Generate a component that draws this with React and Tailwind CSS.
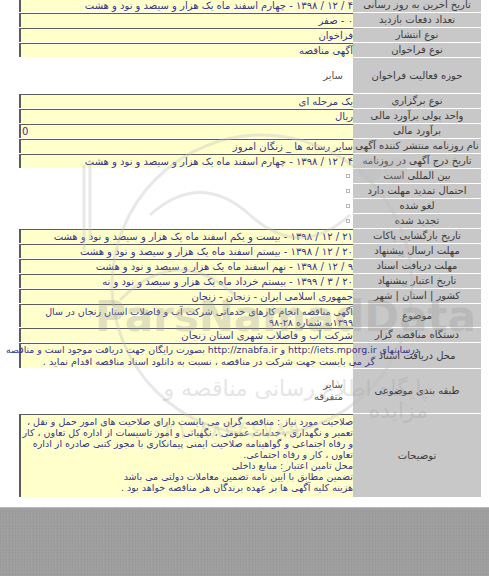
const FONT = { fontFamily: '"DejaVu Sans", Tahoma, sans-serif' };

const rows = [
  { label: 'تاریخ آخرین به روز رسانی', value: '۴ / ۱۲ / ۱۳۹۸ - چهارم اسفند ماه یک هزار و سیصد و نود و هشت' },
  { label: 'تعداد دفعات بازدید', value: '۰ - صفر' },
  { label: 'نوع انتشار', value: 'فراخوان' },
  { label: 'نوع فراخوان', value: 'آگهی مناقصه' },
  { label: 'حوزه فعالیت فراخوان', plain: ['سایر'], h: 'h-[35px]' },
  { label: 'نوع برگزاری', value: 'یک مرحله ای' },
  { label: 'واحد پولی برآورد مالی', value: 'ریال' },
  { label: 'برآورد مالی', value: '0', ltr: true },
  { label: 'نام روزنامه منتشر کننده آگهی', value: 'سایر رسانه ها _ زنگان امروز' },
  { label: 'تاریخ درج آگهی در روزنامه', value: '۴ / ۱۲ / ۱۳۹۸ - چهارم اسفند ماه یک هزار و سیصد و نود و هشت' },
  { label: 'بین المللی است', check: true },
  { label: 'احتمال تمدید مهلت دارد', check: true },
  { label: 'لغو شده', check: true },
  { label: 'تجدید شده', check: true },
  { label: 'تاریخ بازگشایی پاکات', value: '۲۱ / ۱۲ / ۱۳۹۸ - بیست و یکم اسفند ماه یک هزار و سیصد و نود و هشت' },
  { label: 'مهلت ارسال پیشنهاد', value: '۲۰ / ۱۲ / ۱۳۹۸ - بیستم اسفند ماه یک هزار و سیصد و نود و هشت' },
  { label: 'مهلت دریافت اسناد', value: '۹ / ۱۲ / ۱۳۹۸ - نهم اسفند ماه یک هزار و سیصد و نود و هشت' },
  { label: 'تاریخ اعتبار پیشنهاد', value: '۲۰ / ۳ / ۱۳۹۹ - بیستم خرداد ماه یک هزار و سیصد و نود و نه' },
  { label: 'کشور | استان | شهر', value: 'جمهوری اسلامی ایران - زنجان - زنجان' },
  {
    label: 'موضوع',
    lines: ['آگهی مناقصه انجام کارهای خدماتی شرکت آب و فاضلاب استان زنجان در سال', '۱۳۹۹به شماره ۲۸-۹۸'],
    h: 'h-[23px]',
  },
  { label: 'دستگاه مناقصه گزار', value: 'شرکت آب و فاضلاب شهری استان زنجان' },
  { label: 'محل دریافت اسناد', docs: true, h: 'h-[25px]' },
  { label: 'طبقه بندی موضوعی', plain: ['سایر', 'متفرقه'], h: 'h-[44px]' },
  {
    label: 'توضیحات',
    lines: [
      'صلاحیت مورد نیاز : مناقصه گران می بایست دارای صلاحیت های امور حمل و نقل ،',
      'تعمیر و نگهداری ، خدمات عمومی ، نگهبانی و امور تاسیسات از اداره کل تعاون ، کار',
      'و رفاه اجتماعی و گواهینامه صلاحیت ایمنی پیمانکاری با مجوز کتبی صادره از اداره',
      'تعاون ، کار و رفاه اجتماعی.',
      'محل تامین اعتبار : منابع داخلی',
      'تضمین مطابق با آیین نامه تضمین معاملات دولتی می باشد',
      'هزینه کلیه آگهی ها بر عهده برندگان هر مناقصه خواهد بود .',
    ],
    h: 'h-[83px]',
  },
];

function Value({ row }) {
  if (row.check) {
    return (
      <div className="flex h-full items-center pr-[3px]">
        <span className="block h-[4px] w-[4px] border border-[#b8b8b8] bg-white" />
      </div>
    );
  }
  if (row.plain) {
    return (
      <div className="flex h-full flex-col justify-center pr-[10px] text-[10px] leading-[12px] text-[#555]">
        {row.plain.map((t) => (
          <div key={t}>{t}</div>
        ))}
      </div>
    );
  }
  const box = 'h-full bg-[#ffffcc] border-t border-l-2 border-[#5c5c5c] text-[#35358c] overflow-visible';
  if (row.docs) {
    return (
      <div className={`${box} text-[9.4px] leading-[12px]`}>
        <div className="relative z-10 mr-[-66px] whitespace-nowrap">
          درسایتهای <span dir="ltr">http://iets.mporg.ir</span> و <span dir="ltr">http://znabfa.ir</span> بصورت رایگان جهت دریافت موجود است و مناقصه
        </div>
        <div className="relative z-10 mr-[-22px] whitespace-nowrap text-[9.7px]">
          گر می بایست جهت شرکت در مناقصه ، نسبت به دانلود اسناد مناقصه اقدام نماید .
        </div>
      </div>
    );
  }
  if (row.lines) {
    return (
      <div className={`${box} text-[9.5px] leading-[11px] pt-px`}>
        {row.lines.map((t) => (
          <div key={t} className="whitespace-nowrap">
            {t}
          </div>
        ))}
      </div>
    );
  }
  return (
    <div className={`${box} flex items-center text-[10px] leading-none ${row.ltr ? 'justify-end pl-px' : ''}`}>
      <span className="whitespace-nowrap">{row.value}</span>
    </div>
  );
}

function Watermark() {
  return (
    <div className="pointer-events-none absolute inset-0 z-20">
      <svg width="489" height="576" className="absolute left-0 top-0">
        <g fill="none" stroke="#bdbdbd" strokeOpacity="0.35" strokeWidth="3">
          <circle cx="262" cy="285" r="150" />
          <path d="M90 160 L90 240 M84 165 L84 250" />
          <path d="M150 215 Q200 170 250 215 T350 215" />
          <path d="M120 300 Q180 240 240 300" />
        </g>
        <g fill="#bdbdbd" fillOpacity="0.3">
          <circle cx="395" cy="170" r="12" />
          <circle cx="370" cy="170" r="12" />
        </g>
      </svg>
      <div className="absolute left-[95px] top-[296px] text-[42px] font-bold leading-none text-[#9a9a9a] opacity-30" style={{ fontFamily: '"DejaVu Sans", sans-serif' }}>
        ParsNamadData
      </div>
      <div dir="rtl" className="absolute left-[98px] top-[378px] w-[330px] text-[22px] leading-none text-[#9a9a9a] opacity-25" style={FONT}>
        پایگاه اطلاع رسانی مناقصه و مزایده
      </div>
      <div className="absolute left-[150px] top-[418px] text-[24px] leading-none text-[#9a9a9a] opacity-20" style={FONT}>
        ۰۲۱-۸۸۳۴۶۷۸۹
      </div>
    </div>
  );
}

export default function App() {
  return (
    <div className="relative h-[576px] w-[489px] overflow-hidden bg-white" style={FONT}>
      <div dir="rtl" className="-mt-[2px] flex flex-col gap-px pl-[19px] pr-[8px]">
        {rows.map((row) => (
          <div key={row.label} className={`flex ${row.h || 'h-[14px]'}`}>
            <div className="flex w-[128px] shrink-0 items-center justify-center whitespace-nowrap bg-[#c8c8c8] text-[10px] leading-none text-[#3a3a3a]">
              {row.label}
            </div>
            <div className="min-w-0 flex-1">
              <Value row={row} />
            </div>
          </div>
        ))}
      </div>
      <div className="mt-[10px] h-[70px] border-t border-[#bcbcbc] bg-[#d9d9d9] bg-[repeating-linear-gradient(90deg,#d2d2d2_0px,#dedede_2px,#d4d4d4_3px),repeating-linear-gradient(0deg,#d6d6d6_0px,#e0e0e0_2px,#d3d3d3_3px)] bg-blend-multiply" />
      <Watermark />
    </div>
  );
}
